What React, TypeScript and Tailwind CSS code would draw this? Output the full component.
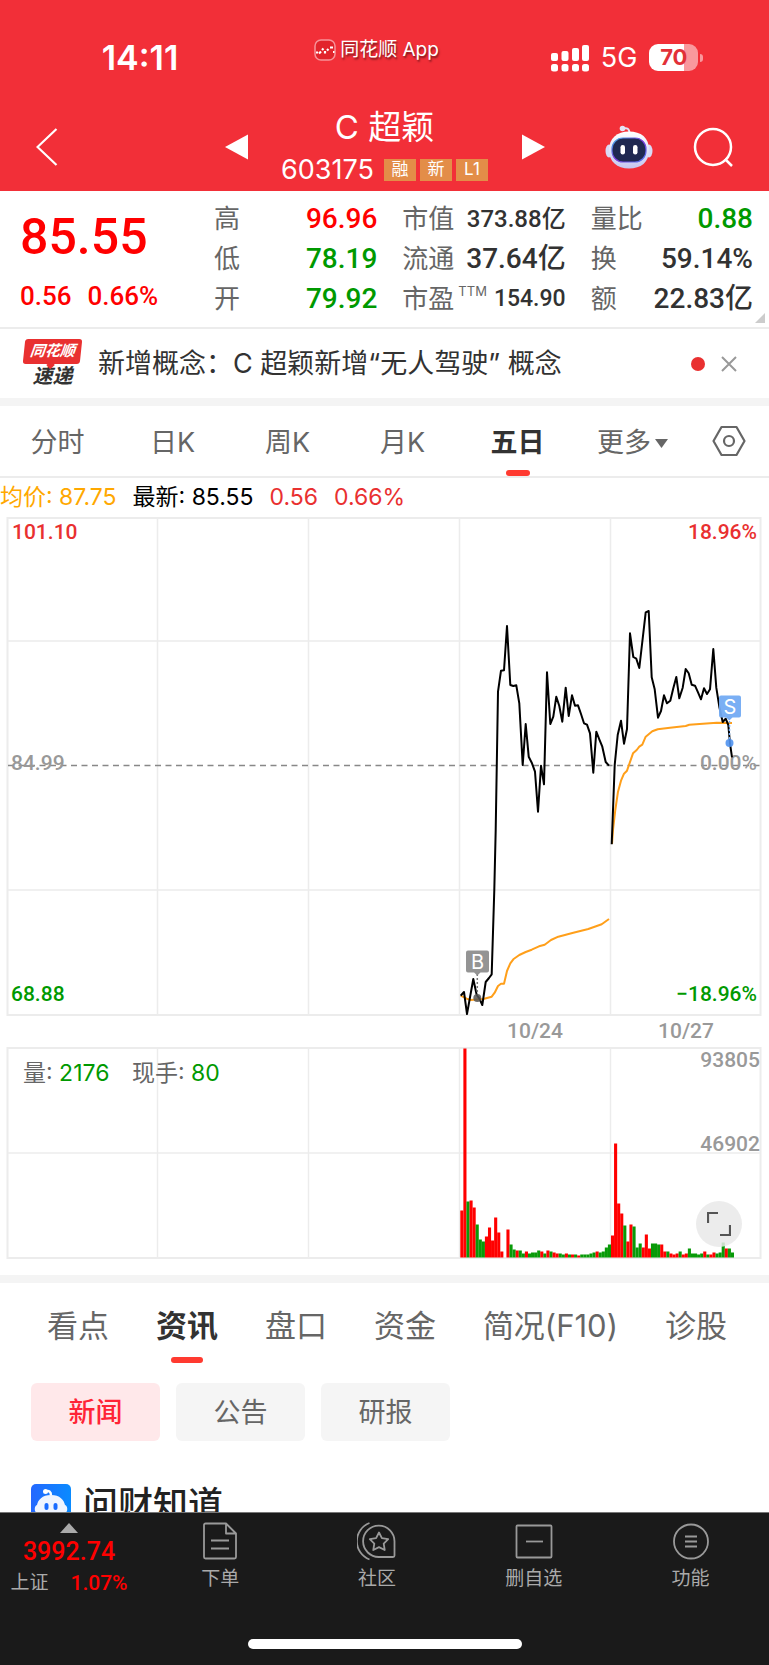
import { useState } from 'react';

interface Quote {
  label: string;
  value: string;
  note?: string;
  valueClass: string;
}

const quoteColumns: Quote[][] = [
  [
    { label: '高', value: '96.96', valueClass: 'text-[28px] text-[#ff0000]' },
    { label: '低', value: '78.19', valueClass: 'text-[28px] text-[#009900]' },
    { label: '开', value: '79.92', valueClass: 'text-[28px] text-[#009900]' },
  ],
  [
    { label: '市值', value: '373.88亿', valueClass: 'text-[24px] text-[#323232]' },
    { label: '流通', value: '37.64亿', valueClass: 'text-[28px] text-[#323232]' },
    { label: '市盈', note: 'TTM', value: '154.90', valueClass: 'text-[23px] text-[#323232]' },
  ],
  [
    { label: '量比', value: '0.88', valueClass: 'text-[28px] text-[#009900]' },
    { label: '换', value: '59.14%', valueClass: 'text-[28px] text-[#323232]' },
    { label: '额', value: '22.83亿', valueClass: 'text-[28px] text-[#323232]' },
  ],
];

const periods = ['分时', '日K', '周K', '月K', '五日'];
const sections = ['看点', '资讯', '盘口', '资金', '简况(F10)', '诊股'];
const filters = ['新闻', '公告', '研报'];

const priceDay1 =
  '460.7,478.7 464,475 467,497 473.3,462 476.7,478 479.3,481.3 482.3,488 485.7,465 489,461 491.7,457.3 494.3,373 495.7,313 498,174.7 501,153.7 504,153.3 507,109 510.3,168 513.3,169 516.3,168.3 519.3,186.3 522.7,248 525.7,207 528.7,239.7 532,246.3 535,254.7 538,294.7 541,248.7 544,267.3 547,155.3 550.3,207 553.3,199.7 556.3,179.7 559.3,189 562.3,204.7 565.7,170.7 568.7,199 572,178.3 575,188.7 578,188.3 581,197 584,206.3 587,207.7 590,216.3 593.3,255.7 596.3,214.7 599.3,222.3 602.3,229.7 605.7,245 609,248.7';
const priceDay2 =
  '611.7,327.3 614.7,248 617.7,218 621,203.7 624,226.7 627,212 630,116.3 633.3,140 636.3,141.7 639.3,151 645.7,95.3 648.7,94 651.7,160.3 654.7,172.3 658,200.7 661,194 664,178.3 667,186.3 670.3,183.7 673.3,171.3 676.3,160 679.3,181.3 682.7,170.7 685.7,152 688.7,156.3 691.7,167.7 695,168.7 698,175.3 701,182.3 704,171.3 707,177 710,172.3 713.3,132 716.3,170.7 719.3,189.7 722.7,205 725.7,201.7 728.3,208 730,226.3 732,240.3';
const averageDay1 =
  '460.7,478.7 466.7,481.7 470.7,483 483.3,482 491.7,479.7 494.7,475.7 498,469 501,466.7 504,466.7 507,454 510.3,446.3 513.3,442.3 519.3,438 525.7,435 531.7,432.7 539,429.3 544.7,427.7 551,423 558.3,419.7 573.3,415.7 588.3,412 601.7,407.3 609,402';
const averageDay2 =
  '612,327 613,313 615.3,293 618,274.7 621,263.7 624,256.7 627,253.7 633,236.3 636.7,233 639.3,229.7 642.3,227.7 645.7,219.7 648.7,217.3 652.3,214.3 657.7,212.3 670,210.7 685.7,209 689.3,207.7 716.7,205.7 732,206';

// r = up bar, g = down bar, the number is its height
const volumes =
  'r47 r209 g56 r57 r50 g33 g18 g16 r21 r30 r17 r40 r25 r6 r0 r28 g13 g8 r7 g7 g4 r6 g4 g5 g5 g7 r6 g4 r7 g6 r5 r4 g4 g3 r4 g3 r3 g3 r2 g3 g3 g3 g4 g5 r6 g5 g6 g10 g13 r22 r114 r54 r44 g32 r16 r33 g31 g10 g14 r10 r23 r9 g14 g14 g13 r13 r6 g6 r4 r3 r4 g6 r3 r4 g9 g4 g4 g3 g4 r6 g3 r3 r5 g4 g5 g15 r9 g9 g5'
    .split(' ')
    .map((bar) => ({ up: bar[0] === 'r', height: Number(bar.slice(1)) }));

const gridX = [157.5, 308.5, 459.5, 610.5];

function RobotIcon() {
  return (
    <svg viewBox="0 0 48 44" className="w-12 h-11">
      <defs>
        <linearGradient id="robotShell" x1="0" y1="0" x2="0" y2="1">
          <stop offset="0" stopColor="#ffffff" />
          <stop offset="1" stopColor="#c5c6f0" />
        </linearGradient>
        <linearGradient id="robotRim" x1="0" y1="0" x2="1" y2="1">
          <stop offset="0" stopColor="#41b5e8" />
          <stop offset="0.5" stopColor="#7a35d8" />
          <stop offset="1" stopColor="#4d7cf0" />
        </linearGradient>
      </defs>
      <path d="M18 3.5c4-1 6.500 0 6.500 5" fill="none" stroke="#e4e4f6" strokeWidth="2" />
      <circle cx="17.500" cy="3.500" r="2.800" fill="#e4e4f6" />
      <ellipse cx="4" cy="26" rx="3.500" ry="6.500" fill="#d9daf5" />
      <ellipse cx="44" cy="26" rx="3.500" ry="6.500" fill="#d9daf5" />
      <path d="M24 6.500C12 6.500 4 13.500 4 25S12 43.500 24 43.500 44 37.500 44 25 36 6.500 24 6.500Z" fill="url(#robotShell)" />
      <rect x="7" y="13" width="34" height="24" rx="11" fill="#1f2850" stroke="url(#robotRim)" strokeWidth="1.200" />
      <rect x="15.500" y="20" width="4.500" height="9.500" rx="2.200" fill="#fff" />
      <rect x="28" y="20" width="4.500" height="9.500" rx="2.200" fill="#fff" />
    </svg>
  );
}

function Header() {
  return (
    <header className="bg-[#f22f38] text-white">
      {/* Status bar */}
      <div className="grid grid-cols-[280px_1fr_296px] items-center h-[103px]">
        <span className="pt-3 text-center text-[34px] leading-10 font-semibold">14:11</span>
        <div className="flex items-center justify-center gap-1 pb-1">
          <svg viewBox="0 0 22 22" className="w-[22px] h-[22px] shrink-0">
            <rect x="1" y="1" width="20" height="20" rx="6" fill="#e2242c" stroke="#f79298" strokeWidth="1.500" />
            <path d="M2 13.500h2M5 14.500l2-2M8 11l1.500-1.500M11 12v2.500M13 11.500l1.500-1.500M16 8.500h3M19 13h1.500" stroke="#fff" strokeWidth="2.200" />
          </svg>
          <span className="text-[19px] leading-6 whitespace-nowrap [text-shadow:1px_2px_2px_rgba(0,0,0,0.5)]">同花顺 App</span>
        </div>
        <div className="flex items-center justify-center gap-3 pl-3 pt-3">
          <svg viewBox="0 0 38 28" className="w-[38px] h-7" fill="#fff">
            <rect x="0" y="9" width="7" height="8" rx="2" />
            <rect x="10.500" y="7" width="7" height="10" rx="2" />
            <rect x="21" y="4" width="7" height="13" rx="2" />
            <rect x="31" y="1" width="7" height="16" rx="2" />
            <rect x="0" y="20" width="7" height="7.500" rx="2.500" />
            <rect x="10.500" y="20" width="7" height="7.500" rx="2.500" />
            <rect x="21" y="20" width="7" height="7.500" rx="2.500" />
            <rect x="31" y="20" width="7" height="7.500" rx="2.500" />
          </svg>
          <span className="text-[27px] leading-8">5G</span>
          <div className="flex items-center gap-[2px]">
            <div className="w-[49px] h-[27px] rounded-[9px] bg-[linear-gradient(90deg,#fff_71%,#f9989d_71%)] text-center text-[22px] leading-[27px] font-bold text-[#e23038]">
              70
            </div>
            <span className="w-[3px] h-2 rounded-r-full bg-[#f9989d]" />
          </div>
        </div>
      </div>

      {/* Title bar */}
      <div className="grid grid-cols-[1fr_auto_1fr] items-center h-[88px]">
        <div className="flex items-center justify-between pl-9 pr-[33px]">
          <button aria-label="返回">
            <svg viewBox="0 0 22 38" className="w-[22px] h-[38px]" fill="none" stroke="#fff" strokeWidth="2.200">
              <path d="M20.500 1 1.500 19l19 18" />
            </svg>
          </button>
          <button aria-label="上一只">
            <svg viewBox="0 0 23 26" className="w-[23px] h-[26px]">
              <path d="M0 13 23 0.500v25Z" fill="#fff" />
            </svg>
          </button>
        </div>
        <div className="flex flex-col items-center">
          <h1 className="text-[33px] leading-[46px]">C 超颖</h1>
          <div className="flex items-center gap-1">
            <span className="mr-[6px] text-[27px] leading-10">603175</span>
            {['融', '新', 'L1'].map((tag) => (
              <span key={tag} className="w-8 h-[22px] bg-[#e38d48] text-center text-[17px] leading-[21px]">
                {tag}
              </span>
            ))}
          </div>
        </div>
        <div className="flex items-center pl-[34px] pr-9">
          <button aria-label="下一只">
            <svg viewBox="0 0 23 26" className="w-[23px] h-[26px]">
              <path d="M23 13 0 0.500v25Z" fill="#fff" />
            </svg>
          </button>
          <div className="flex items-center gap-10 ml-auto">
            <button aria-label="智能助手">
              <RobotIcon />
            </button>
            <button aria-label="搜索">
              <svg viewBox="0 0 40 40" className="size-10" fill="none" stroke="#fff" strokeWidth="2.500">
                <circle cx="20" cy="20" r="18" />
                <path d="m32 32 7 7" />
              </svg>
            </button>
          </div>
        </div>
      </div>
    </header>
  );
}

function QuotePanel() {
  return (
    <section className="relative flex items-center h-[138px] border-b-2 border-[#ececec] pl-5 pr-4">
      <div className="w-[194px] pt-1 font-[Roboto] font-medium text-[#ff0000]">
        <div className="text-[50px] leading-[62px]">85.55</div>
        <div className="flex gap-4 pt-2 text-[26px] leading-10">
          <span>0.56</span>
          <span>0.66%</span>
        </div>
      </div>
      <div className="flex-1 grid grid-cols-[163fr_163fr_162fr] gap-x-[25px]">
        {quoteColumns.map((column) => (
          <dl key={column[0].label}>
            {column.map((quote) => (
              <div key={quote.label} className="flex items-center justify-between h-10">
                <dt className="text-[26px] leading-10 text-[#666] whitespace-nowrap">
                  {quote.label}
                  {quote.note && <sup className="pl-1 -top-3 text-[13px] leading-3">{quote.note}</sup>}
                </dt>
                <dd className={`font-[Roboto,'Noto_Sans_CJK_SC',sans-serif] font-medium leading-10 whitespace-nowrap ${quote.valueClass}`}>
                  {quote.value}
                </dd>
              </div>
            ))}
          </dl>
        ))}
      </div>
      <svg viewBox="0 0 10 10" className="absolute right-1 bottom-1 size-[10px]">
        <path d="M10 0v10H0Z" fill="#ccc" />
      </svg>
    </section>
  );
}

function NewsBar() {
  return (
    <section className="flex items-center h-[69px] pl-6 pr-8">
      <div className="flex flex-col items-center w-[57px] font-bold italic">
        <div className="relative w-full h-[25px] rounded-[3px] bg-[#e93030] text-center text-[15px] leading-[24px] text-white -skew-x-6">
          同花顺
          <span className="absolute left-[25px] top-[23px] size-[6px] rotate-45 bg-[#e93030]" />
        </div>
        <div className="text-[20px] leading-[24px] text-[#323232]">速递</div>
      </div>
      <a href="#news" className="ml-[17px] text-[27px] leading-10 text-[#323232] whitespace-nowrap">
        新增概念：C 超颖新增“无人驾驶” 概念
      </a>
      <span className="ml-auto size-[14px] rounded-full bg-[#e93030]" />
      <button aria-label="关闭" className="ml-4">
        <svg viewBox="0 0 16 16" className="size-4" fill="none" stroke="#999" strokeWidth="2">
          <path d="m1 1 14 14M15 1 1 15" />
        </svg>
      </button>
    </section>
  );
}

function PeriodTabs() {
  const [active, setActive] = useState('五日');

  return (
    <nav className="grid grid-cols-[repeat(6,1fr)_79px] h-[72px] border-b-2 border-[#ececec] text-[27px] text-[#666]">
      {periods.map((period) => (
        <button
          key={period}
          onClick={() => setActive(period)}
          className={`relative pt-1 ${period === active ? 'font-bold text-[#323232]' : ''}`}
        >
          {period}
          {period === active && (
            <span className="absolute bottom-0 left-1/2 w-6 h-[6px] -translate-x-1/2 rounded-[3px] bg-[#ff3a30]" />
          )}
        </button>
      ))}
      <button className="flex items-center justify-center gap-1 pt-1">
        更多
        <svg viewBox="0 0 13 9" className="w-[13px] h-[9px]">
          <path d="M0 0h13L6.500 9Z" fill="#666" />
        </svg>
      </button>
      <button aria-label="设置" className="flex items-center justify-center pr-[2px]">
        <svg viewBox="0 0 34 32" className="w-[34px] h-8" fill="none" stroke="#666" strokeWidth="2.200" strokeLinejoin="round">
          <path d="M9.500 2h15L32.500 16l-8 14h-15L1.500 16Z" />
          <circle cx="17" cy="16" r="5" />
        </svg>
      </button>
    </nav>
  );
}

function PriceChart() {
  return (
    <svg viewBox="0 0 769 529" className="block w-full h-auto font-[Roboto] font-medium text-[21px]">
      <g fill="none" stroke="#ececec" strokeWidth="1.500">
        <rect x="7.500" y="1" width="753" height="497" strokeWidth="2" />
        {gridX.map((x) => (
          <path key={x} d={`M${x} 1V498`} />
        ))}
        <path d="M8 124H760M8 373H760" />
      </g>
      <path d="M8 248.500H760" stroke="#888" strokeWidth="1.500" strokeDasharray="6 4.500" />
      <text x="12" y="22" fill="#e93030">101.10</text>
      <text x="757" y="22" fill="#e93030" textAnchor="end">18.96%</text>
      <text x="11" y="253" fill="#999">84.99</text>
      <text x="757" y="253" fill="#999" textAnchor="end">0.00%</text>
      <text x="11" y="484" fill="#009900">68.88</text>
      <text x="757" y="484" fill="#009900" textAnchor="end">−18.96%</text>
      <text x="535" y="521" fill="#999" textAnchor="middle">10/24</text>
      <text x="686" y="521" fill="#999" textAnchor="middle">10/27</text>
      <g fill="none" stroke="#ff9f1a" strokeWidth="2" strokeLinejoin="round">
        <polyline points={averageDay1} />
        <polyline points={averageDay2} />
      </g>
      <g fill="none" stroke="#000" strokeWidth="2" strokeLinejoin="round">
        <polyline points={priceDay1} />
        <polyline points={priceDay2} />
      </g>

      {/* Buy and sell markers */}
      <path d="M477.300 457v20" stroke="#777" strokeWidth="1.500" strokeDasharray="2 2" />
      <circle cx="477.300" cy="481" r="4" fill="#555" fillOpacity="0.850" />
      <path d="M468 433.500h19a2 2 0 0 1 2 2v18a2 2 0 0 1-2 2h-6.500l-3.200 3-3.200-3H468a2 2 0 0 1-2-2v-18a2 2 0 0 1 2-2Z" fill="#8e8e8e" fillOpacity="0.950" />
      <text x="477.500" y="452" fill="#fff" textAnchor="middle" className="font-[Inter] font-normal text-[20px]">B</text>
      <path d="M729.500 204v20" stroke="#73abf3" strokeWidth="1.500" strokeDasharray="2 2" />
      <circle cx="729.500" cy="226" r="4" fill="#5092ee" fillOpacity="0.900" />
      <path d="M721 178.500h18a2 2 0 0 1 2 2v18a2 2 0 0 1-2 2h-6.500l-3.200 3-3.200-3H721a2 2 0 0 1-2-2v-18a2 2 0 0 1 2-2Z" fill="#73abf3" fillOpacity="0.950" />
      <text x="730" y="197" fill="#fff" textAnchor="middle" className="font-[Inter] font-normal text-[20px]">S</text>
    </svg>
  );
}

function VolumeChart() {
  return (
    <div className="relative">
      <svg viewBox="0 6 769 229" className="block w-full h-auto font-[Roboto] font-medium text-[21px]">
        <g fill="none" stroke="#ececec" strokeWidth="1.500">
          <rect x="7.500" y="8" width="753" height="210" strokeWidth="2" />
          {gridX.map((x) => (
            <path key={x} d={`M${x} 8V218`} />
          ))}
          <path d="M8 113H760" />
        </g>
        {volumes.map((bar, i) => (
          <rect
            key={i}
            x={460.3 + i * 3.075}
            y={217.5 - bar.height}
            width="3.1"
            height={bar.height}
            fill={bar.up ? '#ff0000' : '#089a08'}
          />
        ))}
        <text x="760" y="27" fill="#999" textAnchor="end">93805</text>
        <text x="760" y="111" fill="#999" textAnchor="end">46902</text>
        <g className="font-[Inter,'Noto_Sans_CJK_SC',sans-serif] font-normal text-[23px]" fill="#666">
          <text x="23" y="41">
            量: <tspan fill="#009900">2176</tspan>
          </text>
          <text x="132" y="41">
            现手: <tspan fill="#009900">80</tspan>
          </text>
        </g>
      </svg>
      <button aria-label="全屏" className="absolute right-[27px] bottom-7 flex items-center justify-center size-[46px] rounded-full bg-[#e9e9e9]/85">
        <svg viewBox="0 0 24 24" className="size-6" fill="none" stroke="#555" strokeWidth="2.200">
          <path d="M1 11V1h10M23 13v10H13" />
        </svg>
      </button>
    </div>
  );
}

function InfoSection() {
  const [section, setSection] = useState('资讯');
  const [filter, setFilter] = useState('新闻');

  return (
    <section id="news">
      <nav className="flex justify-between h-[84px] pl-[47px] pr-[42px] text-[31px] text-[#666]">
        {sections.map((name) => (
          <button
            key={name}
            onClick={() => setSection(name)}
            className={`relative pt-[2px] whitespace-nowrap ${name === section ? 'font-bold text-[#323232]' : ''}`}
          >
            {name}
            {name === section && (
              <span className="absolute bottom-1 left-1/2 w-8 h-[6px] -translate-x-1/2 rounded-[3px] bg-[#ff3a30]" />
            )}
          </button>
        ))}
      </nav>
      <div className="flex gap-4 px-[31px] pt-4">
        {filters.map((name) => (
          <button
            key={name}
            onClick={() => setFilter(name)}
            className={`w-[129px] h-[58px] pt-[2px] rounded-md text-[27px] ${
              name === filter ? 'bg-[#ffe8ea] font-medium text-[#ff2436]' : 'bg-[#f5f5f5] text-[#666]'
            }`}
          >
            {name}
          </button>
        ))}
      </div>
      <div className="flex items-center gap-3 px-[31px] pt-[41px]">
        <svg viewBox="0 0 40 40" className="size-10">
          <defs>
            <linearGradient id="askBg" x1="0" y1="0" x2="1" y2="0">
              <stop offset="0" stopColor="#2468ff" />
              <stop offset="1" stopColor="#0a8bff" />
            </linearGradient>
          </defs>
          <rect width="40" height="40" rx="5" fill="url(#askBg)" />
          <path d="M14 7.500c4-1.500 6 0 6 4" fill="none" stroke="#fff" strokeWidth="2.500" />
          <circle cx="14.500" cy="7.500" r="2.500" fill="#fff" />
          <path d="M20 11c-9 0-13 5-14 10-3 1-3 7 0 8 2 5 8 7 14 7s12-2 14-7c3-1 3-7 0-8-1-5-5-10-14-10Z" fill="#f0f5ff" />
          <rect x="13.500" y="19" width="4" height="7" rx="2" fill="#1a6cff" />
          <rect x="22.500" y="19" width="4" height="7" rx="2" fill="#1a6cff" />
        </svg>
        <h2 className="text-[35px] leading-[44px] font-medium text-[#222]">问财知道</h2>
      </div>
    </section>
  );
}

function BottomBar() {
  return (
    <nav className="fixed inset-x-0 bottom-0 h-[153px] border-t border-[#777] bg-[#1a1a1a] text-[#aaa]">
      <div className="grid grid-cols-[142px_repeat(4,1fr)] pt-2 text-[19px] leading-7">
        <button className="flex flex-col items-center pr-1">
          <svg viewBox="0 0 18 10" className="w-[18px] h-[10px] mt-[2px]">
            <path d="M9 0 18 10H0Z" fill="#aaa" />
          </svg>
          <span className="pt-1 font-[Roboto] font-medium text-[25px] leading-[30px] text-[#ff0000]">3992.74</span>
          <span className="flex items-center gap-[22px] pt-[2px]">
            上证
            <span className="font-[Roboto] font-medium text-[21px] text-[#ff0000]">1.07%</span>
          </span>
        </button>
        <button className="flex flex-col items-center gap-1">
          <svg viewBox="0 0 40 40" className="size-10" fill="none" stroke="#999" strokeWidth="1.800" strokeLinejoin="round">
            <path d="M26 2.500H5.500a1.500 1.500 0 0 0-1.500 1.500v32A1.500 1.500 0 0 0 5.500 37.500h29A1.500 1.500 0 0 0 36 36V12.500ZM26 2.500v10h10M11 19.500h18M11 27.500h18" />
          </svg>
          下单
        </button>
        <button className="flex flex-col items-center gap-1">
          <svg viewBox="0 0 40 40" className="size-10" fill="none" stroke="#999" strokeWidth="1.800" strokeLinejoin="round">
            <path d="M37.500 20.500A15.700 15.700 0 1 0 22 36h14a1.500 1.500 0 0 0 1.500-1.500ZM12.500 2a19.500 19.500 0 0 0 0 36.500" />
            <path d="m22 11.500 2.900 5.700 6.300 1-4.500 4.500 1 6.300-5.700-2.900-5.700 2.900 1-6.300-4.500-4.500 6.300-1Z" />
          </svg>
          社区
        </button>
        <button className="flex flex-col items-center gap-1">
          <svg viewBox="0 0 40 40" className="size-10" fill="none" stroke="#999" strokeWidth="1.800">
            <rect x="2.500" y="4.500" width="35" height="32" rx="1" />
            <path d="M12 20.500h17" />
          </svg>
          删自选
        </button>
        <button className="flex flex-col items-center gap-1">
          <svg viewBox="0 0 40 40" className="size-10" fill="none" stroke="#999" strokeWidth="1.800">
            <circle cx="20" cy="20.500" r="17" />
            <path d="M14 15.500h12M14 20.500h12M14 25.500h12" />
          </svg>
          功能
        </button>
      </div>
      <div className="absolute bottom-4 left-1/2 w-[274px] h-[10px] -translate-x-1/2 rounded-full bg-white" />
    </nav>
  );
}

export default function App() {
  return (
    <div className="min-h-screen w-full overflow-hidden bg-white font-[Inter,'Noto_Sans_CJK_SC',sans-serif]">
      <Header />
      <main>
        <QuotePanel />
        <NewsBar />
        <div className="h-2 bg-[#f4f4f4]" />
        <PeriodTabs />
        <div className="flex items-center h-[39px] text-[23px] whitespace-pre">
          <span className="text-[#ffa800]">均价: 87.75</span>
          <span className="pl-4 text-black">最新: 85.55</span>
          <span className="pl-4 text-[#e93030]">0.56</span>
          <span className="pl-4 text-[#e93030]">0.66%</span>
        </div>
        <PriceChart />
        <VolumeChart />
        <div className="h-2 bg-[#f4f4f4]" />
        <InfoSection />
      </main>
      <BottomBar />
    </div>
  );
}
